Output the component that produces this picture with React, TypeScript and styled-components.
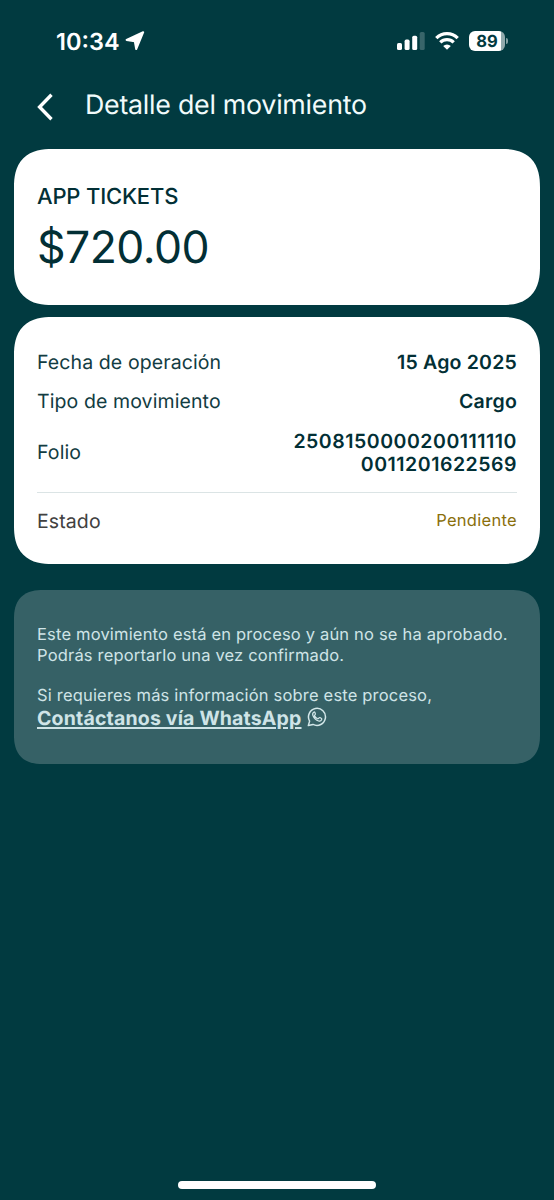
import React from 'react';
import styled, { createGlobalStyle } from 'styled-components';

const GlobalStyle = createGlobalStyle`
  * { box-sizing: border-box; }
  body {
    margin: 0;
    background: #013a40;
    font-family: Inter, "Liberation Sans", sans-serif;
    text-rendering: geometricPrecision;
  }
`;

const Screen = styled.main`
  width: 554px;
  height: 1200px;
  background: #013a40;
  display: flex;
  flex-direction: column;
  overflow: hidden;
`;

const StatusBar = styled.div`
  height: 82px;
  padding: 0 46px 0 56px;
  display: flex;
  align-items: center;
  justify-content: space-between;
  flex: none;
`;

const StatusGroup = styled.div<{ $gap: number }>`
  display: flex;
  align-items: center;
  gap: ${(p) => p.$gap}px;
`;

const Time = styled.span`
  color: #fff;
  font-size: 23.5px;
  font-weight: 600;
  line-height: 28px;
  width: 64px;
  padding-top: 1px;
  letter-spacing: 0;
`;

const Header = styled.header`
  height: 67px;
  flex: none;
  display: flex;
  align-items: flex-start;
  padding: 6px 0 0 37px;
`;

const BackButton = styled.button`
  border: 0;
  background: none;
  padding: 5px 0 0;
  width: 48px;
  display: flex;
`;

const Title = styled.h1`
  margin: 0;
  color: #f1fbfb;
  font-size: 26.8px;
  font-weight: 400;
  line-height: 34px;
  letter-spacing: -0.27px;
`;

const Card = styled.section<{ $height: number; $top: number; $muted?: boolean }>`
  height: ${(p) => p.$height}px;
  flex: none;
  margin: ${(p) => p.$top}px 14px 0;
  padding: 0 23px;
  border-radius: ${(p) => (p.$muted ? 29 : 38)}px;
  corner-shape: superellipse(1.3);
  background: ${(p) => (p.$muted ? '#366166' : '#fff')};
  color: ${(p) => (p.$muted ? '#cfe4e7' : '#022f35')};
`;

const Merchant = styled.div`
  padding-top: 34px;
  font-size: 22px;
  font-weight: 500;
  line-height: 28px;
  letter-spacing: -0.18px;
`;

const Amount = styled.div`
  font-size: 44.5px;
  line-height: 54px;
  margin-top: 9px;
  letter-spacing: -0.5px;
`;

const Row = styled.div<{ $height: number; $top?: number }>`
  display: flex;
  justify-content: space-between;
  align-items: center;
  height: ${(p) => p.$height}px;
  margin-top: ${(p) => p.$top ?? 0}px;
`;

const Label = styled.span<{ $grey?: boolean }>`
  font-size: 19.5px;
  line-height: 24px;
  padding-bottom: 1px;
  letter-spacing: 0.1px;
  color: ${(p) => (p.$grey ? '#414141' : '#123c42')};
`;

const Value = styled.span<{ $tracking?: number }>`
  font-size: 19.5px;
  font-weight: 600;
  line-height: 23px;
  letter-spacing: ${(p) => p.$tracking ?? 0.2}px;
  text-align: right;
`;

const Pending = styled.span`
  font-size: 16.5px;
  line-height: 22px;
  padding-bottom: 2px;
  letter-spacing: 0.3px;
  color: #8a6f0c;
`;

const Divider = styled.hr`
  border: 0;
  height: 1px;
  margin: 8px 0 0;
  background: #dbe4e5;
`;

const Notice = styled.p<{ $top: number }>`
  margin: ${(p) => p.$top}px 0 0;
  font-size: 16.5px;
  line-height: 21px;
  letter-spacing: 0.18px;
  white-space: nowrap;
`;

const Contact = styled.div`
  display: flex;
  align-items: center;
  gap: 5px;
  height: 24px;
  svg { margin-bottom: 2px; }
`;

const ContactLink = styled.a`
  font-size: 19.5px;
  font-weight: 700;
  line-height: 24px;
  letter-spacing: 0.17px;
  text-decoration: underline;
  text-decoration-thickness: 2px;
  text-underline-offset: 2px;
`;

const HomeIndicator = styled.div`
  width: 198px;
  height: 8px;
  flex: none;
  border-radius: 4px;
  background: #fff;
  margin: auto auto 11px 178px;
`;

const LocationIcon = () => (
  <svg width="20" height="20" viewBox="0 0 20 20">
    <path d="M18.2 1.2 11.2 18 9.8 10.2 1.6 8.9Z" fill="#fff" stroke="#fff" strokeWidth="2" strokeLinejoin="round" />
  </svg>
);

const BackIcon = () => (
  <svg width="18" height="28" viewBox="0 0 18 28">
    <path d="M14.5 1.8 2.6 14 14.5 26.2" fill="none" stroke="#fff" strokeWidth="3.4" />
  </svg>
);

const SignalIcon = () => (
  <svg width="28" height="18" viewBox="0 0 28 18" fill="#fff">
    <rect x="0" y="11" width="5" height="7" rx="1.6" />
    <rect x="7.6" y="7.6" width="5" height="10.4" rx="1.6" />
    <rect x="15.2" y="3.7" width="5" height="14.3" rx="1.6" />
    <rect x="22.7" y="0" width="5" height="18" rx="1.6" opacity="0.22" />
  </svg>
);

const WifiIcon = () => (
  <svg width="24" height="18" viewBox="0 0 24 18">
    <g fill="none" stroke="#fff" strokeWidth="3.3">
      <path d="M1.3 6.1a15.2 15.2 0 0 1 21.4 0" />
      <path d="M5.3 10.3a9.5 9.5 0 0 1 13.4 0" />
    </g>
    <path d="M12 17.8 8.2 14a5.4 5.4 0 0 1 7.6 0Z" fill="#fff" />
  </svg>
);

const Battery = styled.div`
  display: flex;
  align-items: center;
  gap: 1px;
  &::after {
    content: '';
    width: 2px;
    height: 6px;
    border-radius: 0 2px 2px 0;
    background: #82a0a3;
  }
`;

const BatteryBody = styled.div`
  width: 36px;
  height: 20px;
  border-radius: 6px;
  background: linear-gradient(90deg, #fff 32px, #91a9ac 32px);
  color: #013a40;
  font-size: 16.5px;
  font-weight: 700;
  line-height: 20px;
  text-align: center;
`;

const WhatsAppIcon = () => (
  <svg width="20" height="20" viewBox="0 0 20 20" fill="none" stroke="#d3e7e9" strokeWidth="1.5" strokeLinejoin="round">
    <path d="M1.3 18.6 2.6 14.1A8.5 8.5 0 1 1 6 17.4Z" />
    <path d="M6.8 5.3c-1.2.8-1.4 2.1-.8 3.4 1.2 2.7 3 4.4 5.6 5.3 1.3.4 2.6-.2 3.1-1.4.2-.5.2-.8-.2-1.1l-1.6-.9c-.4-.2-.6 0-.9.3l-.6.7c-.3.3-.6.2-1 0-1.3-.7-2.2-1.6-2.8-2.7-.2-.4-.1-.6.2-.9l.5-.7c.2-.3.1-.5 0-.8l-.6-1.4c-.2-.3-.5-.2-.9.2Z" strokeWidth="1.2" />
  </svg>
);

export default function App() {
  return (
    <Screen>
      <GlobalStyle />
      <StatusBar>
        <StatusGroup $gap={5}>
          <Time>10:34</Time>
          <LocationIcon />
        </StatusGroup>
        <StatusGroup $gap={10}>
          <SignalIcon />
          <WifiIcon />
          <Battery><BatteryBody>89</BatteryBody></Battery>
        </StatusGroup>
      </StatusBar>
      <Header>
        <BackButton aria-label="Volver"><BackIcon /></BackButton>
        <Title>Detalle del movimiento</Title>
      </Header>
      <Card $height={156} $top={0}>
        <Merchant>APP TICKETS</Merchant>
        <Amount>$720.00</Amount>
      </Card>
      <Card $height={247} $top={12}>
        <Row $height={39} $top={26}>
          <Label>Fecha de operación</Label>
          <Value>15 Ago 2025</Value>
        </Row>
        <Row $height={39}>
          <Label>Tipo de movimiento</Label>
          <Value>Cargo</Value>
        </Row>
        <Row $height={63}>
          <Label>Folio</Label>
          <Value $tracking={0.52}>2508150000200111110<br />0011201622569</Value>
        </Row>
        <Divider />
        <Row $height={56}>
          <Label $grey>Estado</Label>
          <Pending>Pendiente</Pending>
        </Row>
      </Card>
      <Card $height={174} $top={26} $muted>
        <Notice $top={34}>
          Este movimiento está en proceso y aún no se ha aprobado.<br />
          Podrás reportarlo una vez confirmado.
        </Notice>
        <Notice $top={19}>Si requieres más información sobre este proceso,</Notice>
        <Contact>
          <ContactLink>Contáctanos vía WhatsApp</ContactLink>
          <WhatsAppIcon />
        </Contact>
      </Card>
      <HomeIndicator />
    </Screen>
  );
}
